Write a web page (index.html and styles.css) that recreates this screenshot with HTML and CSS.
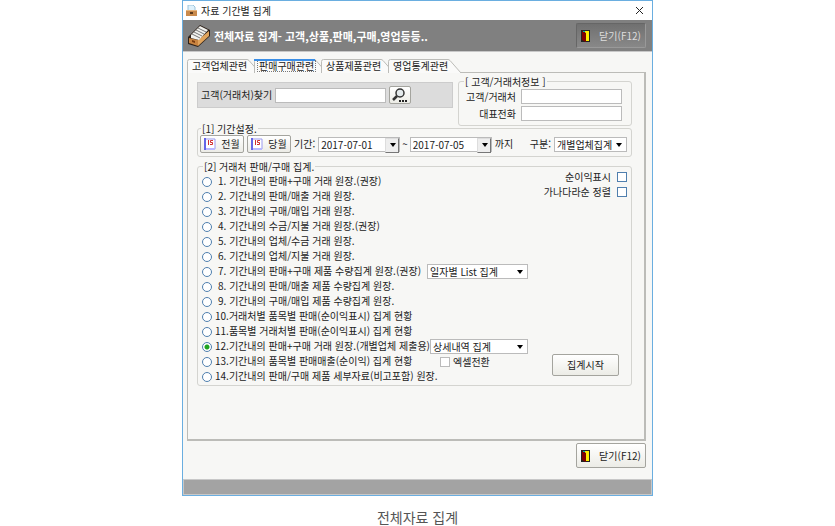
FILE: index.html
```html
<!DOCTYPE html>
<html lang="ko">
<head>
    <meta charset="UTF-8">
    <meta name="viewport" content="width=device-width, initial-scale=1.0">
    <title>자료 기간별 집계</title>
    <link rel="stylesheet" href="styles.css">
</head>
<body>
    <svg width="0" height="0" class="defs" aria-hidden="true">
        <symbol id="door" viewBox="0 0 9 12">
            <path d="M0 0h9v12H0z" fill="#222"/>
            <path d="M4 1h4v10H4z" fill="#ffee00"/>
            <path d="M1 1l4 2v9l-4-2z" fill="#800000"/>
            <path d="M2 1h2v1H2z" fill="#00b0b0"/>
        </symbol>
        <symbol id="calendar" viewBox="0 0 12 12">
            <path d="M1 1h10v10H1z" fill="#fff" stroke="#9a9af0"/>
            <path d="M1 0v12" stroke="#6666e8" stroke-width="2"/>
            <path d="M2 11h9" stroke="#b8b8ff" stroke-width="2"/>
            <path d="M4.500 2v5M9 2.500H6.500v2H8.500v2H6" stroke="#d03030" fill="none"/>
        </symbol>
        <symbol id="tab" viewBox="0 0 74 14">
            <path d="M0.5 14V2.500Q0.500 0.500 2.500 0.500H60Q61 0.500 62 1.500L73 14" fill="#fafaf9" stroke="#bcbcb8"/>
        </symbol>
    </svg>

    <figure>
        <div class="window">
            <div class="titlebar">
                <svg width="11" height="12" viewBox="0 0 11 12" aria-hidden="true">
                    <path d="M2 0h5l2 2v4H2z" fill="#dff1fb" stroke="#9cc4dc"/>
                    <path d="M0 5h11v6H0z" fill="#c98a4c"/>
                    <path d="M0 5h11v1H0z" fill="#e8b67c"/>
                    <path d="M4 7h3v2H4z" fill="#5c3a1c"/>
                </svg>
                <span>자료 기간별 집계</span>
                <button class="close" aria-label="닫기">
                    <svg width="9" height="9" viewBox="0 0 9 9"><path d="M1 1l7 7M8 1l-7 7" stroke="#222"/></svg>
                </button>
            </div>

            <div class="toolbar">
                <svg width="24" height="24" viewBox="0 0 24 24" aria-hidden="true">
                    <path d="M1 13L13 1l10 5v6L11 23 1 20z" fill="#2c2018"/>
                    <path d="M2 14l9 2v6l-9-3z" fill="#c98440"/>
                    <path d="M11 16L22 7v5L11 22z" fill="#e0a45c"/>
                    <path d="M4 11L13 2l8 4-9 10-8-2z" fill="#f2f2ee"/>
                    <path d="M5 10l8 4M7 8l8 4M9 6l8 4M11 4l8 4" stroke="#777"/>
                    <path d="M5 16l3 1v2l-3-1z" fill="#7a3c10"/>
                </svg>
                <h1>전체자료 집계- 고객,상품,판매,구매,영업등등..</h1>
                <button class="btn exit dark"><svg width="9" height="12" aria-hidden="true"><use href="#door"/></svg>닫기(F12)</button>
            </div>

            <div class="tabs" role="tablist">
                <button class="tab" role="tab"><svg aria-hidden="true"><use href="#tab"/></svg><span>고객업체관련</span></button>
                <button class="tab active" role="tab" aria-selected="true"><svg aria-hidden="true"><use href="#tab"/></svg><span>판매구매관련</span></button>
                <button class="tab" role="tab"><svg aria-hidden="true"><use href="#tab"/></svg><span>상품제품관련</span></button>
                <button class="tab" role="tab"><svg aria-hidden="true"><use href="#tab"/></svg><span>영업통계관련</span></button>
            </div>

            <div class="panel">
                <div class="top">
                    <div class="find">
                        <label for="find">고객(거래처)찾기</label>
                        <input type="text" id="find">
                        <button class="btn search" aria-label="찾기">
                            <svg width="16" height="14" viewBox="0 0 16 14">
                                <circle cx="8" cy="5" r="4" fill="#e4eaec" stroke="#333" stroke-width="1.500"/>
                                <path d="M5 8l-4 4" stroke="#333" stroke-width="2.500"/>
                                <path d="M7 12h2v2H7zM10 12h2v2h-2zM13 12h2v2h-2z" fill="#222"/>
                            </svg>
                        </button>
                    </div>
                    <fieldset class="info">
                        <legend>[ 고객/거래처정보 ]</legend>
                        <label for="client">고객/거래처</label>
                        <input type="text" id="client">
                        <label for="phone">대표전화</label>
                        <input type="text" id="phone">
                    </fieldset>
                </div>

                <fieldset class="period">
                    <legend>[1] 기간설정.</legend>
                    <button class="btn month"><svg width="12" height="12" aria-hidden="true"><use href="#calendar"/></svg>전월</button>
                    <button class="btn month"><svg width="12" height="12" aria-hidden="true"><use href="#calendar"/></svg>당월</button>
                    <label for="from">기간:</label>
                    <span class="combo date"><select id="from"><option>2017-07-01</option></select></span>
                    <span class="tilde">~</span>
                    <span class="combo date"><select id="to"><option>2017-07-05</option></select></span>
                    <label for="to">까지</label>
                    <label for="kind" class="kind">구분:</label>
                    <span class="combo"><select id="kind"><option>개별업체집계</option></select></span>
                </fieldset>

                <fieldset class="report">
                    <legend>[2] 거래처 판매/구매 집계.</legend>
                    <div class="body">
                        <ul>
                            <li><label><input type="radio" name="report"><span>1. 기간내의 판매+구매 거래 원장.(권장)</span></label></li>
                            <li><label><input type="radio" name="report"><span>2. 기간내의 판매/매출 거래 원장.</span></label></li>
                            <li><label><input type="radio" name="report"><span>3. 기간내의 구매/매입 거래 원장.</span></label></li>
                            <li><label><input type="radio" name="report"><span>4. 기간내의 수금/지불 거래 원장.(권장)</span></label></li>
                            <li><label><input type="radio" name="report"><span>5. 기간내의 업체/수금 거래 원장.</span></label></li>
                            <li><label><input type="radio" name="report"><span>6. 기간내의 업체/지불 거래 원장.</span></label></li>
                            <li>
                                <label><input type="radio" name="report"><span>7. 기간내의 판매+구매 제품 수량집계 원장.(권장)</span></label>
                                <span class="combo"><select aria-label="목록 방식"><option>일자별 List 집계</option></select></span>
                            </li>
                            <li><label><input type="radio" name="report"><span>8. 기간내의 판매/매출 제품 수량집계 원장.</span></label></li>
                            <li><label><input type="radio" name="report"><span>9. 기간내의 구매/매입 제품 수량집계 원장.</span></label></li>
                            <li class="wide"><label><input type="radio" name="report"><span>10.거래처별 품목별 판매(순이익표시) 집계 현황</span></label></li>
                            <li class="wide"><label><input type="radio" name="report"><span>11.품목별 거래처별 판매(순이익표시) 집계 현황</span></label></li>
                            <li class="wide">
                                <label><input type="radio" name="report" checked><span>12.기간내의 판매+구매 거래 원장.(개별업체 제출용)</span></label>
                                <span class="combo"><select aria-label="집계 방식"><option>상세내역 집계</option></select></span>
                            </li>
                            <li class="wide">
                                <label><input type="radio" name="report"><span>13.기간내의 품목별 판매매출(순이익) 집계 현황</span></label>
                                <label class="excel"><input type="checkbox">엑셀전환</label>
                            </li>
                            <li class="wide"><label><input type="radio" name="report"><span>14.기간내의 판매/구매 제품 세부자료(비고포함) 원장.</span></label></li>
                        </ul>
                        <div class="side">
                            <div class="options">
                                <label>순이익표시<input type="checkbox"></label>
                                <label>가나다라순 정렬<input type="checkbox"></label>
                            </div>
                            <button class="btn start">집계시작</button>
                        </div>
                    </div>
                </fieldset>
            </div>

            <div class="footer">
                <button class="btn exit"><svg width="9" height="12" aria-hidden="true"><use href="#door"/></svg>닫기(F12)</button>
            </div>
            <div class="status"></div>
        </div>
        <figcaption>전체자료 집계</figcaption>
    </figure>
</body>
</html>
```
FILE: styles.css
```css
* {
    box-sizing: border-box;
}

body {
    margin: 0;
    background-color: #fff;
    color: #222;
    font-family: "Noto Sans CJK KR", sans-serif;
    font-size: 10px;
    line-height: 12px;
}

.defs {
    position: absolute;
}

figure {
    margin: 0;
}

figcaption {
    margin-top: 11px;
    color: #555;
    font-size: 14px;
    line-height: 20px;
    text-align: center;
}

input, select, button {
    margin: 0;
    padding: 0;
    color: inherit;
    font: inherit;
}

label, legend, span {
    white-space: nowrap;
}

.window {
    max-width: 471px;
    margin: 0 auto;
    border: 1px solid #6aaee0;
    background-color: #f7f7f5;
}

.titlebar {
    display: flex;
    align-items: center;
    gap: 4px;
    height: 19px;
    padding: 0 8px 0 3px;
    background-color: #fff;
}

.close {
    display: flex;
    margin-left: auto;
    border: none;
    background: none;
}

.toolbar {
    display: flex;
    align-items: center;
    gap: 3px;
    height: 32px;
    padding: 0 6px 0 4px;
    border-bottom: 1px solid #c8c8c8;
    background-color: #808080;
}

.toolbar svg {
    flex: none;
}

h1 {
    margin: 0;
    color: #fff;
    font-size: 11px;
    line-height: 14px;
    white-space: nowrap;
}

.btn {
    display: flex;
    align-items: center;
    justify-content: center;
    border: 1px solid #a4a49e;
    border-radius: 2px;
    background: linear-gradient(#fff, #ecece6);
}

.exit {
    gap: 9px;
    width: 70px;
    height: 25px;
    margin-left: auto;
}

.dark {
    border-color: #666 #999 #999 #666;
    background: linear-gradient(#707070, #888);
    color: #ddd;
}

.tabs {
    display: flex;
    height: 13px;
    margin: 7px 4px 0;
}

.tab {
    position: relative;
    width: 67px;
    padding: 0 0 0 3px;
    border: none;
    background: none;
    text-align: left;
}

.tab svg {
    position: absolute;
    top: 0;
    left: 0;
    width: 74px;
    height: 14px;
}

.tab span {
    position: relative;
    display: inline-block;
    padding: 0 1px;
    border: 1px solid transparent;
    line-height: 10px;
}

.tab.active span {
    border: 1px dotted #777;
}

.tab.active::before {
    content: "";
    position: absolute;
    top: 0;
    left: 0;
    z-index: 1;
    width: 61px;
    height: 2px;
    background-color: #3a8ee6;
}

.panel {
    margin: 0 6px 0 4px;
    padding: 3px 12px 53px 9px;
    border: 1px solid #bcbcb8;
    border-width: 1px 2px 2px 1px;
}

input[type="text"] {
    height: 15px;
    border: 1px solid #bbb;
    background-color: #fff;
}

.top {
    display: flex;
    gap: 5px;
    align-items: flex-start;
}

.find {
    display: flex;
    flex: 1;
    align-items: center;
    gap: 3px;
    height: 26px;
    margin-top: 6px;
    padding: 0 3px;
    border: 1px solid #ccc;
    background-color: #dcdcdc;
}

.find input {
    width: 111px;
}

.search {
    width: 22px;
    height: 18px;
}

fieldset {
    min-width: 0;
    margin: 0;
    border: 1px solid #d4d4d0;
    border-radius: 3px;
}

legend {
    margin-left: 1px;
    padding: 0 1px;
    line-height: 11px;
    text-align: left;
}

.info {
    display: grid;
    grid-template-columns: 1fr 101px;
    gap: 2px 5px;
    align-items: center;
    width: 174px;
    padding: 2px 9px 4px 4px;
}

.info label {
    text-align: right;
}

.period {
    display: flex;
    align-items: center;
    gap: 3px;
    margin-top: -3px;
    padding: 1px 4px 3px 2px;
}

.month {
    gap: 5px;
    width: 44px;
    height: 18px;
}

.combo {
    position: relative;
    display: inline-block;
    width: 73px;
    height: 15px;
}

.combo select {
    display: block;
    width: 100%;
    height: 15px;
    padding: 0 2px;
    border: 1px solid #bbb;
    border-radius: 0;
    background-color: #fff;
    line-height: 13px;
    appearance: none;
}

.combo::after {
    content: "";
    position: absolute;
    top: 6px;
    right: 5px;
    border: 3px solid transparent;
    border-top: 4px solid #000;
    border-bottom: none;
    pointer-events: none;
}

.date {
    width: 82px;
}

.date::before {
    content: "";
    position: absolute;
    top: 1px;
    right: 1px;
    width: 12px;
    height: 13px;
    border: 1px solid #ddd;
    border-right-color: #777;
    border-bottom-color: #777;
    background-color: #eee;
    pointer-events: none;
}

.date::after {
    right: 4px;
}

.tilde {
    margin: 0 -1px;
}

.kind {
    margin-left: auto;
}

.report {
    margin-top: 4px;
    padding: 2px 4px 1px;
}

.body {
    display: flex;
    justify-content: space-between;
}

ul {
    width: 326px;
    margin: 0;
    padding: 0;
    list-style: none;
}

li {
    display: grid;
    grid-template-columns: minmax(225px, auto) 1fr;
    align-items: center;
    height: 15px;
}

li label {
    display: flex;
    align-items: center;
    gap: 6px;
}

.wide label {
    gap: 3px;
}

li label span {
    margin-top: -1px;
}

li .combo {
    width: 100%;
}

input[type="radio"], input[type="checkbox"] {
    flex: none;
    width: 10px;
    height: 10px;
    border: 1px solid #4f7fae;
    background-color: #fff;
    appearance: none;
}

input[type="radio"] {
    border-radius: 50%;
}

input[type="radio"]:checked {
    background-image: radial-gradient(circle, #1fa31f 2px, #fff 3px);
}

.excel {
    margin-left: 13px;
}

.excel input[type="checkbox"] {
    border-color: #bbb;
}

.side {
    display: flex;
    flex-direction: column;
    justify-content: space-between;
    align-items: flex-end;
}

.options {
    margin-top: -5px;
}

.options label {
    display: flex;
    align-items: center;
    justify-content: flex-end;
    gap: 6px;
    height: 15px;
}

.start {
    width: 67px;
    height: 22px;
    margin: 0 8px 8px 0;
}

.footer {
    padding: 2px 6px 11px;
}

.status {
    height: 16px;
    border: 1px solid #c8c8c8;
    background-color: #a3a3a3;
}
```
